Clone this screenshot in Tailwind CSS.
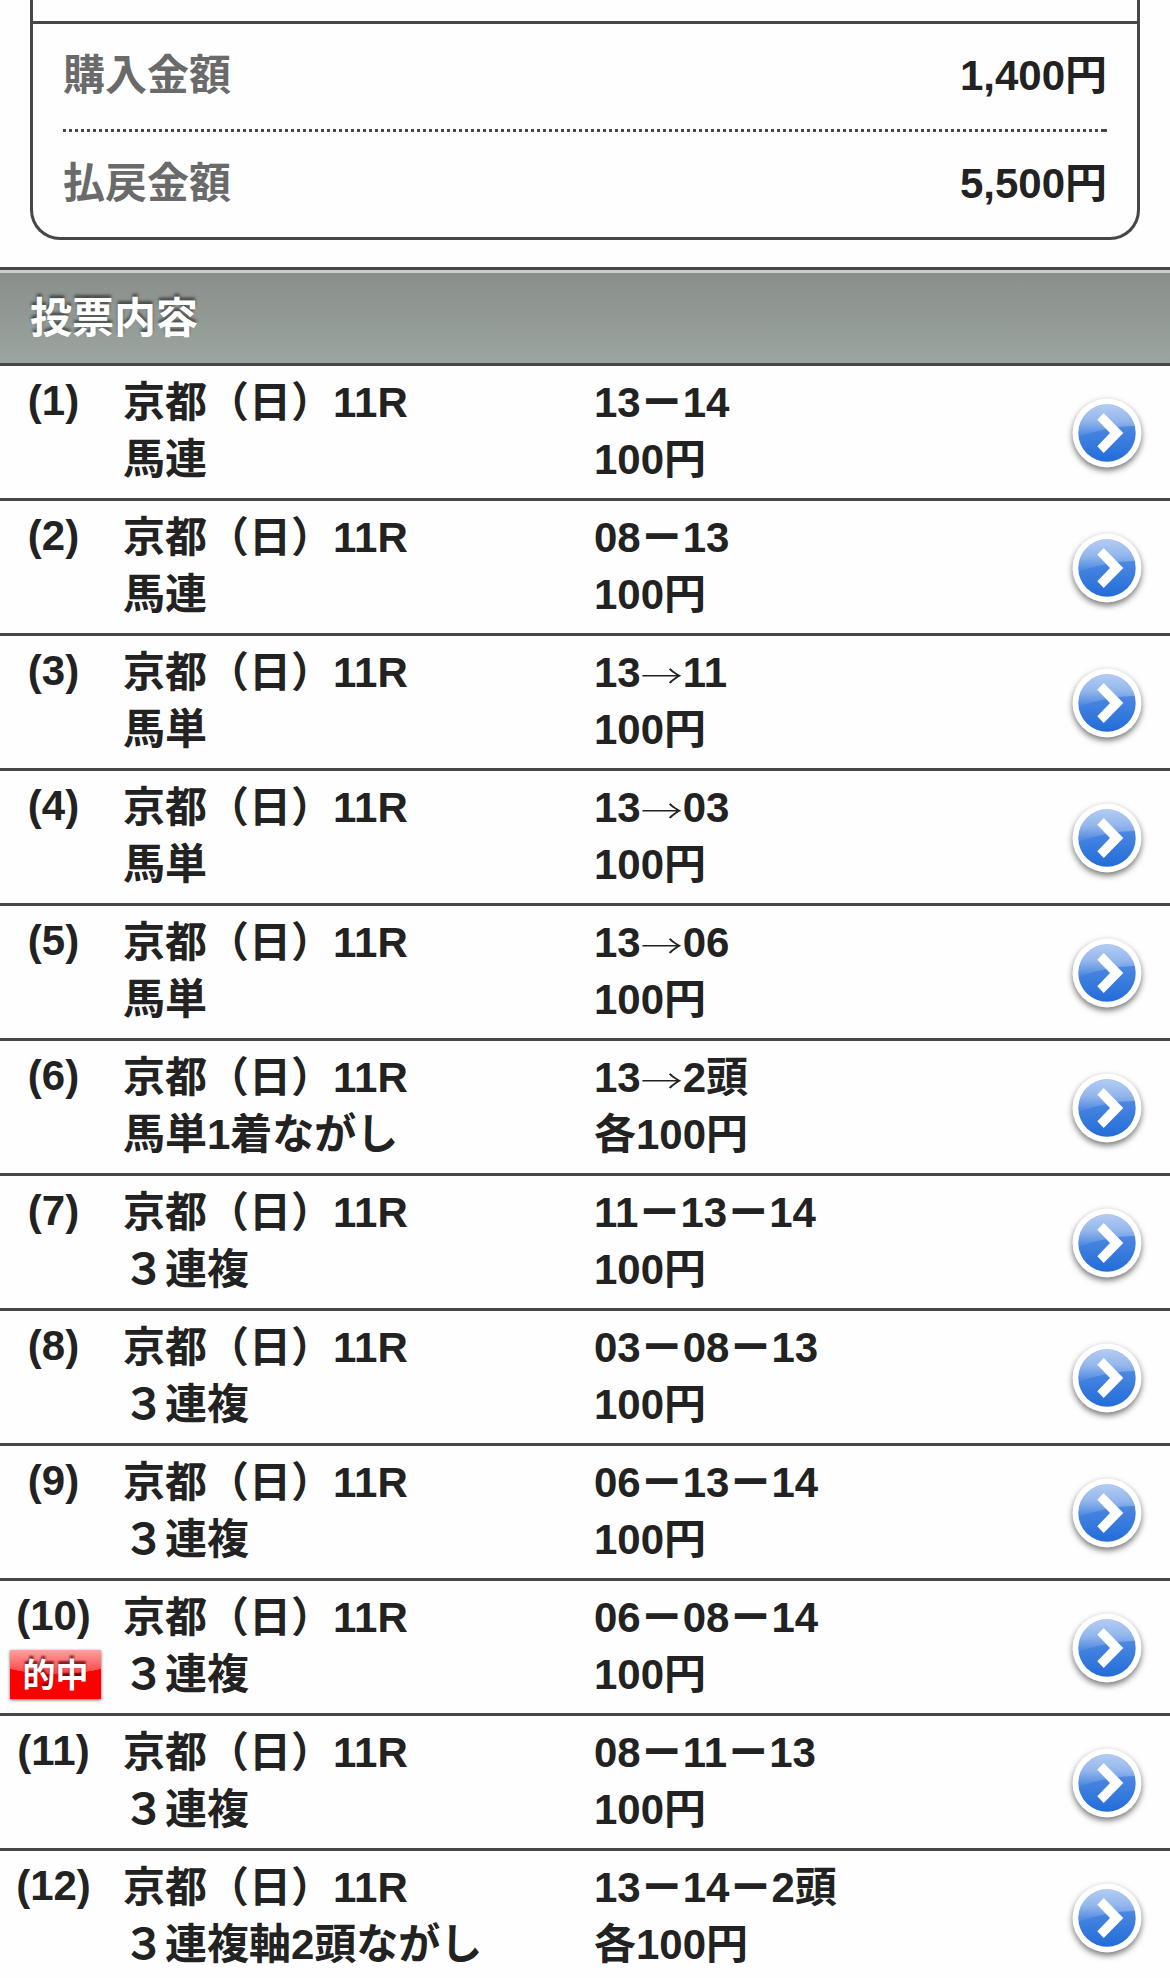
<!DOCTYPE html>
<html lang="ja">

<head>
  <meta charset="UTF-8">
  <meta name="viewport" content="width=device-width, initial-scale=1.0">
  <title>投票内容</title>
  <script src="https://cdn.jsdelivr.net/npm/@tailwindcss/browser@4"></script>
</head>

<body class="bg-[#fefefe] text-[#222] font-bold text-[42px] leading-[57px] font-['Liberation_Sans','Noto_Sans_CJK_JP',sans-serif] h-[1978px] overflow-hidden">
  <!-- Shared gradients -->
  <svg class="absolute w-0 h-0">
    <defs>
      <linearGradient id="blue" x1="0" y1="0" x2="0" y2="1">
        <stop offset="0" stop-color="#6d9de6" />
        <stop offset="0.5" stop-color="#4482df" />
        <stop offset="1" stop-color="#226dd9" />
      </linearGradient>
      <linearGradient id="gloss" x1="0" y1="0" x2="0" y2="1">
        <stop offset="0" stop-color="#fff" stop-opacity="0.48" />
        <stop offset="0.5" stop-color="#fff" stop-opacity="0.36" />
        <stop offset="1" stop-color="#fff" stop-opacity="0.03" />
      </linearGradient>
    </defs>
  </svg>

  <!-- Totals -->
  <section class="mx-[30px] h-[240px] border-x-3 border-b-3 border-[#484747] rounded-b-[30px]">
    <div class="h-6 border-b-3 border-[#484747]"></div>
    <dl class="px-[30px]">
      <div class="flex justify-between h-[105px] pt-[23px]">
        <dt class="text-[#6a6a6a]">購入金額</dt>
        <dd>1,400円</dd>
      </div>
      <div class="h-[3px] border-r-3 border-[#484747] bg-[repeating-linear-gradient(to_right,#484747_0_3px,transparent_3px_6px)]"></div>
      <div class="flex justify-between h-[105px] pt-[23px]">
        <dt class="text-[#6a6a6a]">払戻金額</dt>
        <dd>5,500円</dd>
      </div>
    </dl>
  </section>

  <h2 class="mt-[27px] h-[99px] border-y-3 border-[#484747] bg-linear-to-b from-[#898e8a] to-[#9ba5a0] px-[30px] text-white [text-shadow:0_-3px_3px_rgba(0,0,0,0.5)]">
    <span class="block -mx-[30px] h-[3px] bg-[#c5d0cc]"></span>
    <span class="block pt-[17px]">投票内容</span>
  </h2>

  <!-- Bets -->
  <ul id="bet-list"></ul>

  <script>
    const bets = [
      ['馬連', '13－14', '100円'],
      ['馬連', '08－13', '100円'],
      ['馬単', '13→11', '100円'],
      ['馬単', '13→03', '100円'],
      ['馬単', '13→06', '100円'],
      ['馬単1着ながし', '13→2頭', '各100円'],
      ['３連複', '11－13－14', '100円'],
      ['３連複', '03－08－13', '100円'],
      ['３連複', '06－13－14', '100円'],
      ['３連複', '06－08－14', '100円', true],
      ['３連複', '08－11－13', '100円'],
      ['３連複軸2頭ながし', '13－14－2頭', '各100円'],
    ];

    const arrow = `<span class="inline-block relative top-[5px] leading-none scale-y-75 font-['Noto_Sans_CJK_JP'] font-light">→</span>`;
    const dash = `<span class="[-webkit-text-stroke:1.5px_#222]">－</span>`;

    const badge = `
      <span class="block mt-[6px] ml-[10px] w-[91px] h-[49px] pt-[5px] text-[33px] leading-[42px] text-white shadow-[0_1px_3px_rgba(0,0,0,0.6)] bg-[radial-gradient(ellipse_75px_24px_at_50%_0,#fff0_99%,#f00_100%),linear-gradient(#ffa0a0,#ff4040_24px,#f00_25px)] [text-shadow:0_-3px_2px_rgba(70,0,0,0.7)]">的中</span>`;

    const icon = `
      <svg class="w-[78px] h-[78px] overflow-visible drop-shadow-[0_3px_3px_rgba(0,0,0,0.55)]" viewBox="-39 -39 78 78">
        <circle r="34.5" fill="#fff" />
        <circle r="28.7" fill="url(#blue)" />
        <path d="M-28.7 0A28.7 28.7 0 0 1 27.8 -7Q14 -7 0 -4Q-16 -1 -28.7 4Z" fill="url(#gloss)" />
        <path d="M-3.3 -20L16.3 0L-3.3 20L-9.7 13.3L3 0L-9.7 -13.3Z" fill="#fff" />
      </svg>`;

    document.getElementById('bet-list').innerHTML = bets.map(([type, numbers, amount, hit], i) => `
      <li class="flex h-[135px] border-b-3 border-[#484747]">
        <div class="w-[107px] pt-[6px] text-center">(${i + 1})${hit ? badge : ''}</div>
        <div class="w-[487px] pl-4 pt-[8px]">
          <p>京都（日）11R</p>
          <p>${type}</p>
        </div>
        <div class="flex-1 pt-[8px]">
          <p class="h-[57px]">${numbers.replace('→', arrow).replaceAll('－', dash)}</p>
          <p>${amount}</p>
        </div>
        <a href="#" class="mr-6 pt-[28px]">${icon}</a>
      </li>`).join('');
  </script>
</body>

</html>
